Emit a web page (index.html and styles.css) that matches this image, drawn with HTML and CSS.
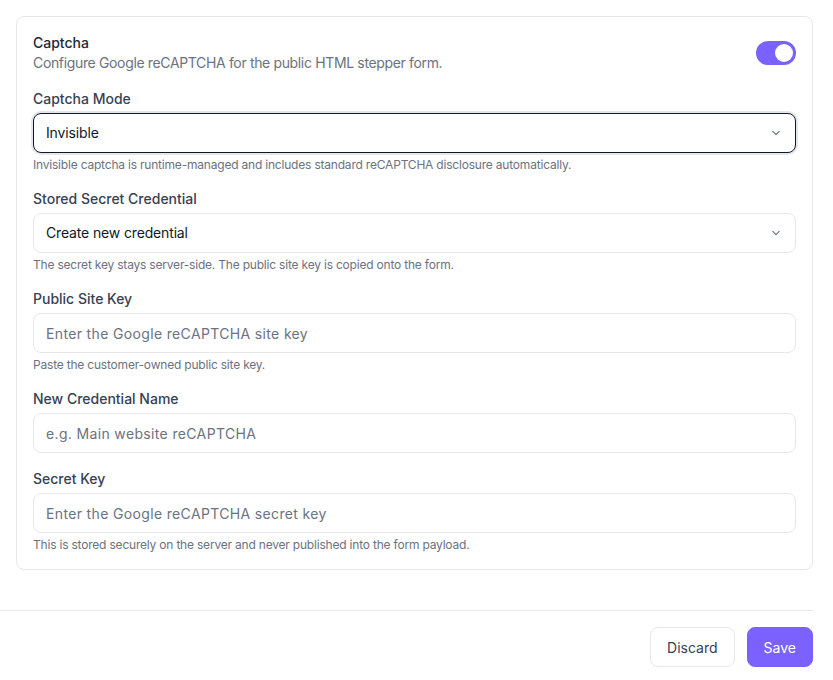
FILE: index.html
```html
<!DOCTYPE html>
<html lang="en">
<head>
    <meta charset="UTF-8">
    <meta name="viewport" content="width=device-width, initial-scale=1.0">
    <title>Captcha settings</title>
    <link rel="stylesheet" href="styles.css">
</head>
<body>
    <div class="page">
        <section class="card">
            <div class="card-header">
                <div>
                    <div class="card-title">Captcha</div>
                    <div class="card-desc">Configure Google reCAPTCHA for the public HTML stepper form.</div>
                </div>
                <span class="toggle is-on"><span class="toggle-knob"></span></span>
            </div>

            <div class="field">
                <label class="field-label">Captcha Mode</label>
                <div class="select is-focused">
                    <span>Invisible</span>
                    <svg class="chevron" viewBox="0 0 20 20" width="16" height="16"><path d="M6 8l4 4 4-4" fill="none" stroke="currentColor" stroke-width="1.5" stroke-linecap="round" stroke-linejoin="round"/></svg>
                </div>
                <p class="field-help">Invisible captcha is runtime-managed and includes standard reCAPTCHA disclosure automatically.</p>
            </div>

            <div class="field">
                <label class="field-label">Stored Secret Credential</label>
                <div class="select">
                    <span>Create new credential</span>
                    <svg class="chevron" viewBox="0 0 20 20" width="16" height="16"><path d="M6 8l4 4 4-4" fill="none" stroke="currentColor" stroke-width="1.5" stroke-linecap="round" stroke-linejoin="round"/></svg>
                </div>
                <p class="field-help">The secret key stays server-side. The public site key is copied onto the form.</p>
            </div>

            <div class="field">
                <label class="field-label">Public Site Key</label>
                <input class="input" type="text" placeholder="Enter the Google reCAPTCHA site key">
                <p class="field-help">Paste the customer-owned public site key.</p>
            </div>

            <div class="field">
                <label class="field-label">New Credential Name</label>
                <input class="input" type="text" placeholder="e.g. Main website reCAPTCHA">
            </div>

            <div class="field">
                <label class="field-label">Secret Key</label>
                <input class="input" type="password" placeholder="Enter the Google reCAPTCHA secret key">
                <p class="field-help">This is stored securely on the server and never published into the form payload.</p>
            </div>
        </section>

        <footer class="actions">
            <button class="btn btn-outline">Discard</button>
            <button class="btn btn-primary">Save</button>
        </footer>
    </div>
</body>
</html>
```

FILE: styles.css
```css
* {
    margin: 0;
    padding: 0;
    box-sizing: border-box;
}

body {
    font-family: Inter, 'Noto Sans', sans-serif;
    font-size: 14px;
    line-height: 20px;
    color: #1f2937;
    background: #fff;
}

.page {
    width: 813px;
}

.card {
    margin: 16px 0 0 16px;
    padding: 16px;
    border: 1px solid #e5e7eb;
    border-radius: 8px;
    display: flex;
    flex-direction: column;
    gap: 16px;
}

.card-header {
    display: flex;
    justify-content: space-between;
    align-items: center;
}

.card-title {
    font-weight: 500;
    color: #1f2937;
}

.card-desc {
    color: #6b7280;
    letter-spacing: -0.35px;
}

/* toggle */
.toggle {
    width: 40px;
    height: 24px;
    border-radius: 12px;
    background: #d1d5db;
    padding: 3px;
    display: flex;
}

.toggle.is-on {
    background: #7b61ff;
    justify-content: flex-end;
}

.toggle-knob {
    width: 18px;
    height: 18px;
    border-radius: 50%;
    background: #fff;
}

/* fields */
.field {
    display: flex;
    flex-direction: column;
}

.field-label {
    font-weight: 500;
    color: #374151;
    margin-bottom: 4px;
}

.field-help {
    margin-top: 4px;
    font-size: 12px;
    line-height: 16px;
    color: #6b7280;
    letter-spacing: -0.2px;
}

.select,
.input {
    height: 40px;
    border: 1px solid #e5e7eb;
    border-radius: 8px;
    padding: 0 12px;
    background: #fff;
    font-family: inherit;
    font-size: 14px;
    color: #111827;
}

.select {
    display: flex;
    align-items: center;
    justify-content: space-between;
    letter-spacing: -0.15px;
}

.select.is-focused {
    border-color: #111827;
    box-shadow: 0 0 0 2px #e5e7eb;
}

.chevron {
    color: #6b7280;
    margin-right: -1px;
}

.input {
    width: 100%;
    outline: none;
}

.input::placeholder {
    color: #6b7280;
    letter-spacing: 0.35px;
}

/* footer */
.actions {
    margin-top: 40px;
    border-top: 1px solid #e5e7eb;
    padding-top: 16px;
    display: flex;
    justify-content: flex-end;
    gap: 12px;
}

.btn {
    height: 40px;
    padding: 0 16px;
    border-radius: 8px;
    font-family: inherit;
    font-size: 14px;
    cursor: pointer;
}

.btn-outline {
    background: #fff;
    border: 1px solid #e5e7eb;
    color: #374151;
}

.btn-primary {
    background: #7b61ff;
    border: 1px solid #7b61ff;
    color: #fff;
}
```
